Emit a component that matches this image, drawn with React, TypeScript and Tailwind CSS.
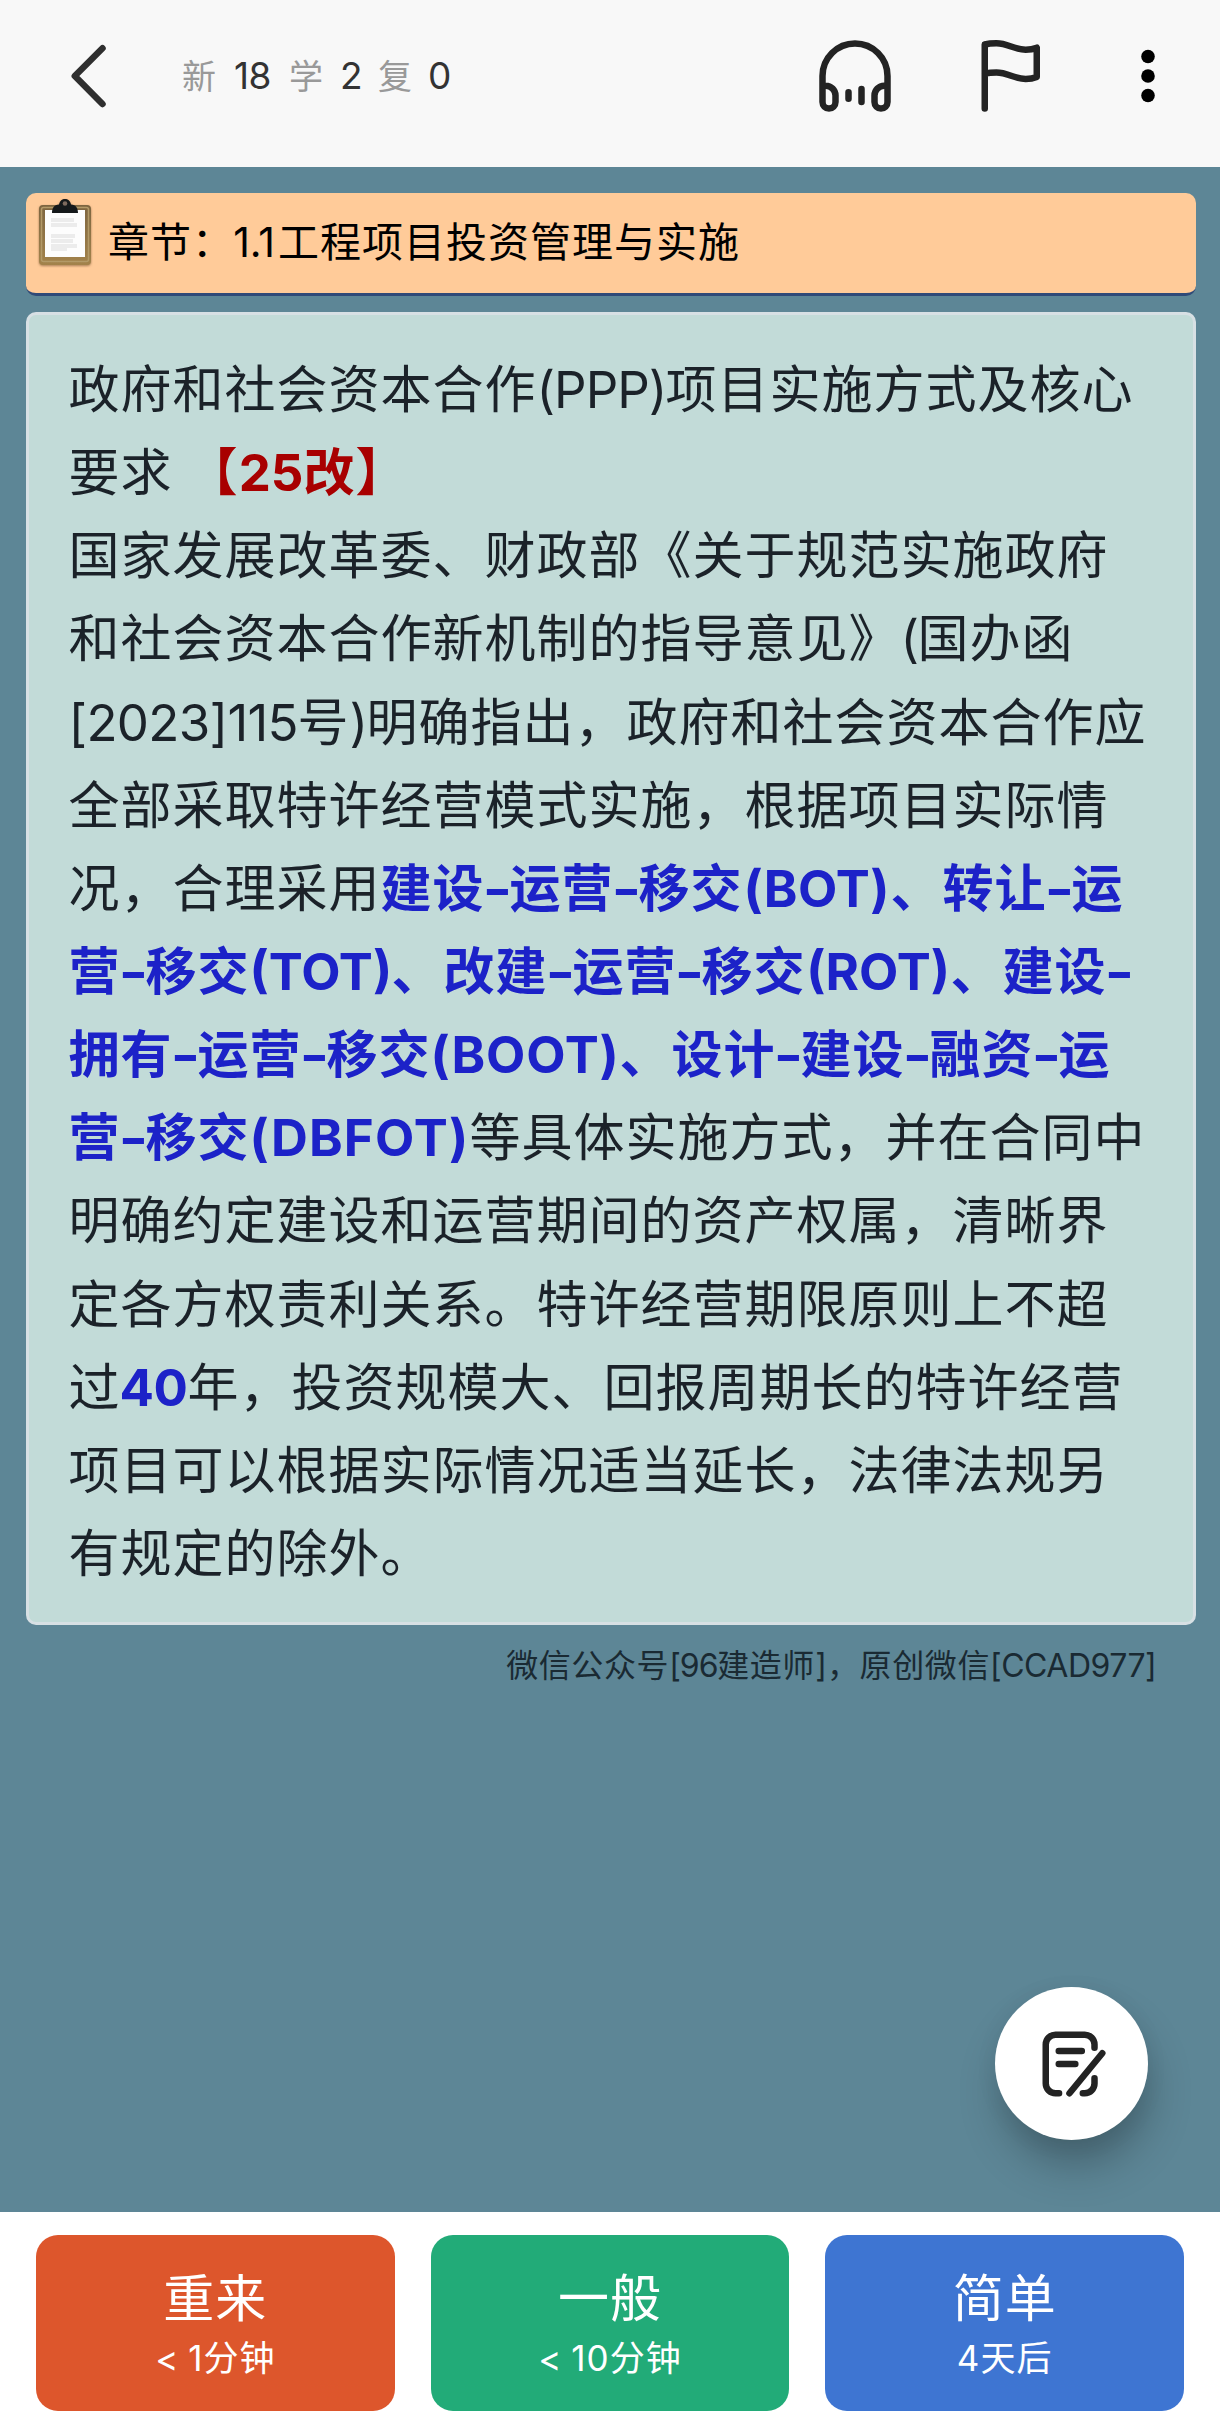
import type { ReactNode } from "react";

type LatinProps = {
  className: string;
  children: ReactNode;
};

// Latin letters and digits set between the Chinese characters
function Latin({ className, children }: LatinProps) {
  return <span className={`inline-block text-center ${className}`}>{children}</span>;
}

function Dash() {
  return <Latin className="w-[25px] scale-x-125 tracking-normal">-</Latin>;
}

function Key({ children }: { children: ReactNode }) {
  return <b className="font-bold text-[#1c22c8]">{children}</b>;
}

function Line({ children }: { children: ReactNode }) {
  return <div className="h-[83.15px] whitespace-nowrap">{children}</div>;
}

function BackIcon() {
  return (
    <svg className="h-[78px] w-[48px]" viewBox="0 0 48 78" fill="none" stroke="#2f2f2f" strokeWidth="6.5" strokeLinecap="round" strokeLinejoin="round">
      <path d="M38.5 11.3 10.8 39l27.7 28" />
    </svg>
  );
}

function HeadphonesIcon() {
  return (
    <svg className="size-[78px]" viewBox="0 0 24 24" fill="none" stroke="#232323" strokeWidth="2" strokeLinecap="round" strokeLinejoin="round">
      <path d="M2 15h1a3 3 0 0 1 3 3v2a2 2 0 0 1-4 0v-8a10 10 0 0 1 20 0v8a2 2 0 0 1-4 0v-2a3 3 0 0 1 3-3h1" />
      <path d="M10 17v2M14 16v4" />
    </svg>
  );
}

function FlagIcon() {
  return (
    <svg className="size-[78px]" viewBox="0 0 24 24" fill="none" stroke="#232323" strokeWidth="2" strokeLinecap="round" strokeLinejoin="round">
      <path d="M3 22V2.3C4 2.05 5.2 1.95 6.6 1.95c3.5 0 5.5 1.95 9 1.95 1.3 0 2.4-.2 3.4-.6v9c-1 .4-2.1.6-3.4.6-3.5 0-5.5-1.95-9-1.95-1.3 0-2.5.1-3.6.3" />
    </svg>
  );
}

function NoteEditIcon() {
  return (
    <svg className="size-[78px]" viewBox="0 0 24 24" fill="none" stroke="#232323" strokeWidth="2" strokeLinecap="round" strokeLinejoin="round">
      <path d="M18 7V6a3 3 0 0 0-3-3H6a3 3 0 0 0-3 3v12a3 3 0 0 0 3 3h1.1" />
      <path d="M18 16.4V18a3 3 0 0 1-3 3h-.6" />
      <path d="M10.3 21 20.4 8.7M7 8h7.1M7 12h5.1" />
    </svg>
  );
}

function ClipboardIcon() {
  return (
    <svg className="h-[70px] w-[56px] drop-shadow-[0_1px_1px_rgba(80,50,20,0.5)]" viewBox="0 0 56 70">
      <defs>
        <linearGradient id="board" x1="0" y1="0" x2="0" y2="1">
          <stop offset="0" stopColor="#7d6540" />
          <stop offset="1" stopColor="#a3834b" />
        </linearGradient>
      </defs>
      <rect x="2" y="7" width="52" height="60" rx="4" fill="url(#board)" />
      <rect x="4.5" y="9.5" width="47" height="54" rx="2" fill="none" stroke="#b39a68" strokeWidth="1.5" />
      <rect x="8" y="12" width="40" height="47" fill="#fdfdfd" />
      <g fill="#ececec">
        <rect x="14" y="20" width="23" height="4" />
        <rect x="14" y="25" width="26" height="4" />
        <rect x="14" y="36" width="24" height="4" />
        <rect x="14" y="41" width="22" height="4" />
        <rect x="14" y="46" width="26" height="4" />
        <rect x="14" y="50" width="16" height="3" />
      </g>
      <path d="M15 15c0-5 2-8 7-8.5C23 2.5 25 1 28 1s5 1.5 6 5.5c5 .5 7 3.5 7 8.5z" fill="#15191b" />
      <circle cx="28" cy="5.5" r="2.3" fill="#7d6a5e" />
    </svg>
  );
}

type AnswerButtonProps = {
  title: string;
  hint: string;
  color: string;
};

function AnswerButton({ title, hint, color }: AnswerButtonProps) {
  return (
    <button className={`flex h-[176px] flex-1 flex-col items-center rounded-[22px] pt-[33px] text-white ${color}`}>
      <span className="text-[51px] leading-[62px] tracking-[1px]">{title}</span>
      <span className="mt-[6px] whitespace-nowrap text-[35px] leading-[44px] tracking-[1px] [word-spacing:-2px]">{hint}</span>
    </button>
  );
}

export default function App() {
  return (
    <div className="flex h-[2429px] w-[1220px] flex-col overflow-hidden bg-[#5d8696] font-['Inter','Noto_Sans_CJK_SC',sans-serif]">
      <header className="flex h-[167px] shrink-0 items-start bg-[#f8f8f8] pl-[64px] pt-[37px]">
        <BackIcon />
        <div className="ml-[70px] flex h-[78px] items-center text-[34px] text-[#333]">
          <span className="w-[52px] text-[#999]">新</span>
          <span className="w-[55px] text-[37px] tracking-[-0.5px]">18</span>
          <span className="w-[51px] text-[#999]">学</span>
          <span className="w-[38px] text-[37px]">2</span>
          <span className="w-[50px] text-[#999]">复</span>
          <span className="w-[24px] text-[37px]">0</span>
        </div>
        <div className="ml-[364px] flex items-center">
          <HeadphonesIcon />
          <div className="ml-[81px]">
            <FlagIcon />
          </div>
          <svg className="ml-[81px] h-[78px] w-[28px]" viewBox="0 0 28 78" fill="#000">
            <circle cx="14" cy="19.5" r="6.8" />
            <circle cx="14" cy="39" r="6.8" />
            <circle cx="14" cy="58.5" r="6.8" />
          </svg>
        </div>
      </header>

      <main className="flex flex-1 flex-col pl-[26px] pr-[24px] pt-[26px]">
        <div className="flex h-[103px] shrink-0 rounded-[10px] border-b-[3px] border-[#2f4a78] bg-[#ffcb99] pl-[11px]">
          <div className="pt-[5px]">
            <ClipboardIcon />
          </div>
          <div className="ml-[15px] whitespace-nowrap text-[41px] leading-[99px] tracking-[1px] text-black">
            章节：
            <Latin className="w-[44px] -translate-x-[2px] tracking-normal">1.1</Latin>
            工程项目投资管理与实施
          </div>
        </div>

        <article className="mt-[16px] h-[1313px] shrink-0 rounded-[10px] border-[3px] border-[#d7e0e4] bg-[#c2dbd8] pl-[39.5px] pt-[33px] text-[51px] leading-[83.15px] tracking-[1px] text-[#1b2229]">
          <Line>
            政府和社会资本合作<Latin className="w-[129px] tracking-[-1px]">(PPP)</Latin>项目实施方式及核心
          </Line>
          <Line>
            要求
            <b className="ml-[14px] font-bold text-[#a80000]">
              【<Latin className="w-[65px] tracking-normal">25</Latin>改】
            </b>
          </Line>
          <Line>国家发展改革委、财政部《关于规范实施政府</Line>
          <Line>
            和社会资本合作新机制的指导意见》<Latin className="w-[17px] tracking-normal">(</Latin>国办函
          </Line>
          <Line>
            <Latin className="w-[229px] tracking-[-0.7px]">[2023]115</Latin>号<Latin className="w-[17px] tracking-normal">)</Latin>明确指出，政府和社会资本合作应
          </Line>
          <Line>全部采取特许经营模式实施，根据项目实际情</Line>
          <Line>
            况，合理采用
            <Key>
              建设<Dash />运营<Dash />移交<Latin className="w-[148px] tracking-[0.3px]">(BOT)</Latin>、转让<Dash />运
            </Key>
          </Line>
          <Line>
            <Key>
              营<Dash />移交<Latin className="w-[142px] tracking-normal">(TOT)</Latin>、改建<Dash />运营<Dash />移交<Latin className="w-[145px] tracking-normal">(ROT)</Latin>、建设<Dash />
            </Key>
          </Line>
          <Line>
            <Key>
              拥有<Dash />运营<Dash />移交<Latin className="w-[189px] tracking-[0.8px]">(BOOT)</Latin>、设计<Dash />建设<Dash />融资<Dash />运
            </Key>
          </Line>
          <Line>
            <Key>
              营<Dash />移交<Latin className="w-[220px] tracking-[1.2px]">(DBFOT)</Latin>
            </Key>
            等具体实施方式，并在合同中
          </Line>
          <Line>明确约定建设和运营期间的资产权属，清晰界</Line>
          <Line>定各方权责利关系。特许经营期限原则上不超</Line>
          <Line>
            过
            <Key>
              <Latin className="w-[67px] -translate-x-[1px] tracking-[-0.5px]">40</Latin>
            </Key>
            年，投资规模大、回报周期长的特许经营
          </Line>
          <Line>项目可以根据实际情况适当延长，法律法规另</Line>
          <Line>有规定的除外。</Line>
        </article>

        <p className="mt-[17px] self-end whitespace-nowrap pr-[40px] text-[32px] leading-[48px] tracking-[0.6px] text-[#1a2a33]">
          微信公众号<Latin className="w-[48px] tracking-[-1px]">[96</Latin>建造师<Latin className="w-[12px] tracking-normal">]</Latin>，原创微信
          <Latin className="w-[166px] tracking-[-0.5px]">[CCAD977]</Latin>
        </p>
      </main>

      <footer className="relative flex h-[217px] shrink-0 gap-[36px] bg-white px-[36px] pt-[23px]">
        <button className="absolute right-[72px] top-[-225px] flex size-[153px] items-center justify-center rounded-full bg-white pl-[6px] shadow-[4px_28px_44px_-4px_rgba(0,0,0,0.27),0_4px_24px_rgba(0,0,0,0.05)]">
          <NoteEditIcon />
        </button>
        <AnswerButton title="重来" hint="< 1分钟" color="bg-[#dd562c]" />
        <AnswerButton title="一般" hint="< 10分钟" color="bg-[#22ab78]" />
        <AnswerButton title="简单" hint="4天后" color="bg-[#3e75d2]" />
      </footer>
    </div>
  );
}
